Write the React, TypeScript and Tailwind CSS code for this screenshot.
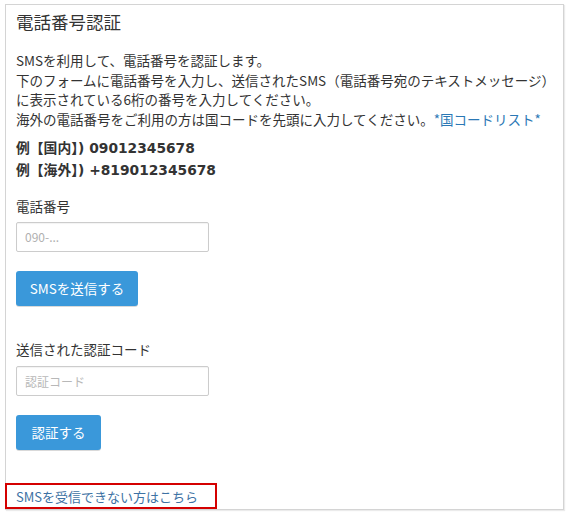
export default function App() {
  return (
    <div
      className="min-h-screen bg-white pl-[5px] pt-[4px] text-[#333]"
      style={{ fontFamily: '"Noto Sans CJK JP", "Noto Sans", sans-serif' }}
    >
      <div className="relative h-[506px] w-[559px] border border-[#d4d4d4] px-[10px] pt-[4px] shadow-[1px_1px_1px_rgba(0,0,0,0.08)]">
        {/* Title */}
        <h1 className="text-[17.5px] leading-[26px] font-normal text-[#333]">電話番号認証</h1>

        {/* Description */}
        <p className="mt-[16px] whitespace-nowrap text-[13.5px] leading-[19.5px]">
          SMSを利用して、電話番号を認証します。
          <br />
          下のフォームに電話番号を入力し、送信されたSMS（電話番号宛のテキストメッセージ）
          <br />
          に表示されている6桁の番号を入力してください。
          <br />
          海外の電話番号をご利用の方は国コードを先頭に入力してください。
          <a href="#" className="text-[#2b78b5]">
            *国コードリスト*
          </a>
        </p>

        <div
          className="mt-[8px] text-[13.8px] font-bold leading-[22px]"
          style={{ fontFamily: '"DejaVu Sans", "Noto Sans CJK JP", sans-serif' }}
        >
          <div>例【国内】) 09012345678</div>
          <div>例【海外】) +819012345678</div>
        </div>

        {/* Phone number */}
        <label className="mt-[14.5px] block text-[13.5px] leading-[20px]">電話番号</label>
        <input
          type="text"
          placeholder="090-..."
          className="mt-[6px] block h-[30px] w-[193px] rounded-[2px] border border-[#ccc] px-[8px] text-[12px] outline-none placeholder:text-[#b0b0b0] shadow-[inset_0_1px_1px_rgba(0,0,0,0.05)]"
        />
        <button className="mt-[19.5px] block h-[35px] w-[122px] rounded-[3px] bg-[#3a98da] text-[13.5px] text-white shadow-[0_1px_0_rgba(0,0,0,0.15)]">
          SMSを送信する
        </button>

        {/* Verification code */}
        <label className="mt-[32.5px] block text-[13.5px] leading-[20px]">送信された認証コード</label>
        <input
          type="text"
          placeholder="認証コード"
          className="mt-[7.5px] block h-[30px] w-[193px] rounded-[2px] border border-[#ccc] px-[8px] text-[12px] outline-none placeholder:text-[#b8b8b8] shadow-[inset_0_1px_1px_rgba(0,0,0,0.05)]"
        />
        <button className="mt-[19px] block h-[35px] w-[85px] rounded-[3px] bg-[#3a98da] text-[13.5px] text-white shadow-[0_1px_0_rgba(0,0,0,0.15)]">
          認証する
        </button>

        {/* Help link with highlight */}
        <div className="relative mt-[37px] text-[13px] leading-[20px]">
          <a href="#" className="text-[#3d72a4]">
            SMSを受信できない方はこちら
          </a>
          <span className="pointer-events-none absolute left-[-11px] top-[-4px] h-[26px] w-[212px] border-2 border-[#d40000]" />
        </div>
      </div>
    </div>
  );
}
